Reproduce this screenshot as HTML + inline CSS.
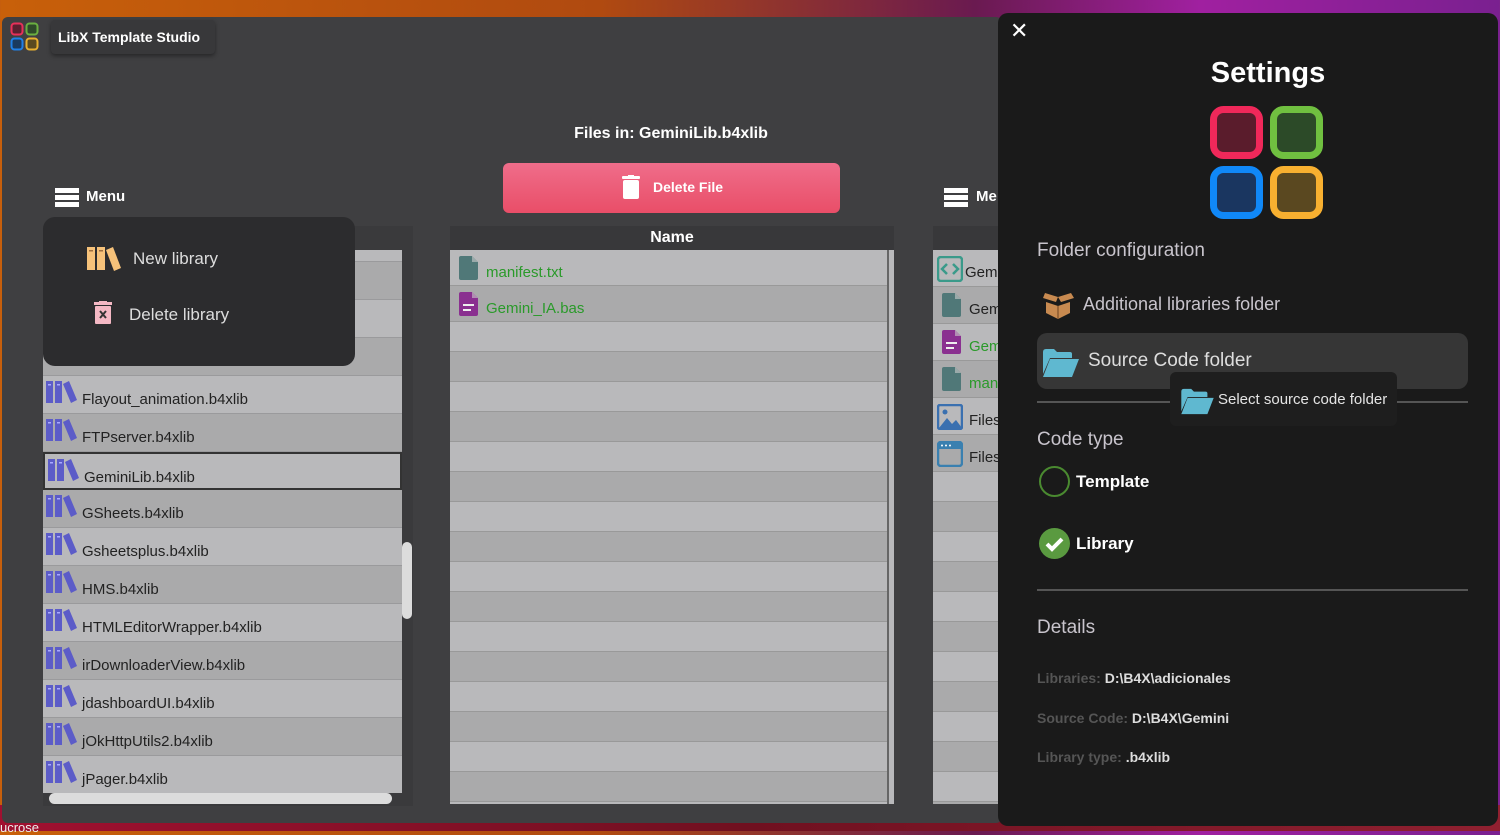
<!DOCTYPE html>
<html><head><meta charset="utf-8"><style>
*{margin:0;padding:0;box-sizing:border-box}
body{width:1500px;height:831px;overflow:hidden;position:relative;font-family:"Liberation Sans","DejaVu Sans",sans-serif;background:linear-gradient(90deg,#c8600a 0%,#b04a10 40%,#6a1a50 65%,#a020a0 80%,#7a2090 100%)}
.abs{position:absolute}
.win{left:2px;top:17px;width:1000px;height:806px;background:#3f3f41;border-radius:6px}
.row{position:absolute;left:0;width:359px;height:38px;border-bottom:1px solid #9a9a9c;font-size:15px;color:#222}
.row .t{position:absolute;left:39px;top:15px}
.row svg{position:absolute;left:3px;top:5px}
.mrow{position:absolute;left:0;width:438px;border-bottom:1px solid #999}
.rrow{position:absolute;left:0;width:70px;border-bottom:1px solid #999}
.panel{left:998px;top:13px;width:500px;height:813px;background:#1a1a1a;border-radius:10px}
.g{color:#c8c4cc}
</style></head><body>
<div class="abs" style="left:0;top:805px;width:1500px;height:26px;background:linear-gradient(90deg,#a01030,#701020 50%,#902030)"></div>
<div class="abs" style="left:0;top:820px;color:#eee;font-size:13px">ucrose</div>
<div class="abs win"></div>
<!-- logo -->
<svg class="abs" style="left:10px;top:22px" width="30" height="30" viewBox="0 0 30 30">
<rect x="1.5" y="1.5" width="11" height="11" rx="3" fill="#5a2030" stroke="#e8305a" stroke-width="2"/>
<rect x="16.5" y="1.5" width="11" height="11" rx="3" fill="#2e4a2a" stroke="#6ab040" stroke-width="2"/>
<rect x="1.5" y="16.5" width="11" height="11" rx="3" fill="#1a3a60" stroke="#2080e8" stroke-width="2"/>
<rect x="16.5" y="16.5" width="11" height="11" rx="3" fill="#5a4a20" stroke="#e8b030" stroke-width="2"/>
</svg>
<div class="abs" style="left:51px;top:20px;width:164px;height:34px;background:#38383a;border-radius:4px;box-shadow:0 2px 4px rgba(0,0,0,.4);color:#fff;font-weight:bold;font-size:14px;line-height:34px;padding-left:7px">LibX Template Studio</div>

<!-- menu -->
<div class="abs" style="left:55px;top:188px;width:24px;height:19px;background:linear-gradient(#fff 0 5px,transparent 5px 7px,#fff 7px 12px,transparent 12px 14px,#fff 14px)"></div>
<div class="abs" style="left:86px;top:188px;color:#fff;font-weight:bold;font-size:15px">Menu</div>
<div class="abs" style="left:944px;top:188px;width:24px;height:19px;background:linear-gradient(#fff 0 5px,transparent 5px 7px,#fff 7px 12px,transparent 12px 14px,#fff 14px)"></div>
<div class="abs" style="left:976px;top:188px;color:#fff;font-weight:bold;font-size:15px">Me</div>

<!-- left list -->
<div class="abs" style="left:43px;top:226px;width:370px;height:580px;background:#3a3a3c"></div>
<div class="abs" style="left:43px;top:250px;width:359px;height:543px;overflow:hidden">
<div class="row" style="top:-26px;background:#b9b9bb"></div>
<div class="row" style="top:12px;background:#aaaaab"></div>
<div class="row" style="top:50px;background:#b9b9bb"></div>
<div class="row" style="top:88px;background:#aaaaab"></div>
<div id="L"></div>
</div>
<div class="abs" style="left:402px;top:542px;width:10px;height:77px;background:#dcdcdc;border-radius:5px"></div>
<div class="abs" style="left:49px;top:793px;width:343px;height:11px;background:#dcdcdc;border-radius:6px"></div>

<!-- popup menu -->
<div class="abs" style="left:43px;top:217px;width:312px;height:149px;background:#2c2c2e;border-radius:12px"></div>
<svg class="abs" style="left:87px;top:247px" width="34" height="24" viewBox="0 0 34 24"><rect x="0" y="0" width="8" height="23" fill="#f6c27a"/><rect x="10" y="0" width="8" height="23" fill="#f6c27a"/><path d="M19 3l7-3 8 21-7 3z" fill="#f6c27a"/><rect x="2" y="3" width="4" height="1.5" fill="#a07040"/><rect x="12" y="3" width="4" height="1.5" fill="#a07040"/></svg>
<div class="abs" style="left:133px;top:249px;color:#ddd;font-size:17px">New library</div>
<svg class="abs" style="left:93px;top:301px" width="20" height="24" viewBox="0 0 20 24"><rect x="1" y="1" width="18" height="3" fill="#f4b8c4"/><rect x="6" y="0" width="8" height="2" fill="#f4b8c4"/><rect x="2" y="5" width="16" height="18" rx="1" fill="#f4b8c4"/><path d="M7 10l6 7M13 10l-6 7" stroke="#333" stroke-width="2"/></svg>
<div class="abs" style="left:129px;top:305px;color:#ddd;font-size:17px">Delete library</div>

<!-- center -->
<div class="abs" style="left:430px;top:125px;width:482px;text-align:center;color:#fff;font-weight:bold;font-size:16px">Files in: GeminiLib.b4xlib</div>
<div class="abs" style="left:503px;top:163px;width:337px;height:50px;border-radius:6px;background:linear-gradient(#ef6d8a,#e94e68)"></div>
<svg class="abs" style="left:622px;top:175px" width="18" height="24" viewBox="0 0 18 24"><rect x="0" y="1" width="18" height="3" rx="1" fill="#fff"/><rect x="6" y="0" width="6" height="2" fill="#fff"/><rect x="1" y="5" width="16" height="19" rx="2" fill="#fff"/></svg>
<div class="abs" style="left:653px;top:179px;color:#fff;font-weight:bold;font-size:14px">Delete File</div>
<div class="abs" style="left:450px;top:226px;width:444px;height:24px;background:#38383a;color:#fff;font-weight:bold;font-size:16px;text-align:center;line-height:24px">Name</div>
<div class="abs" style="left:450px;top:250px;width:444px;height:554px;overflow:hidden;background:#b9b9bb" id="M"></div>

<!-- right partial -->
<div class="abs" style="left:933px;top:226px;width:70px;height:24px;background:#38383a"></div>
<div class="abs" style="left:933px;top:250px;width:70px;height:554px;overflow:hidden;background:#b9b9bb" id="R"></div>

<!-- settings panel -->
<div class="abs panel"></div>
<div class="abs" style="left:1010px;top:18px;color:#fff;font-size:22px">✕</div>
<div class="abs" style="left:998px;top:57px;width:540px;text-align:center;color:#fff;font-weight:bold;font-size:29px">Settings</div>
<svg class="abs" style="left:1210px;top:106px" width="116" height="116" viewBox="0 0 116 116">
<rect x="3.5" y="3.5" width="46" height="46" rx="10" fill="#5a1c2c" stroke="#f0285a" stroke-width="7"/>
<rect x="63.5" y="3.5" width="46" height="46" rx="10" fill="#2c4a28" stroke="#70c040" stroke-width="7"/>
<rect x="3.5" y="63.5" width="46" height="46" rx="10" fill="#1a3660" stroke="#1088f8" stroke-width="7"/>
<rect x="63.5" y="63.5" width="46" height="46" rx="10" fill="#5a4820" stroke="#f8b030" stroke-width="7"/>
</svg>
<div class="abs g" style="left:1037px;top:240px;font-size:19px">Folder configuration</div>
<svg class="abs" style="left:1043px;top:289px" width="31" height="31" viewBox="0 0 31 31"><path d="M15 8l13-4 3 5-13 4zM15 8L2 4l-2 5 13 4z" fill="#c88a50"/><path d="M3 13l12 4 12-4v11l-12 6-12-6z" fill="#c88a50"/><path d="M15 17v13" stroke="#8a5a30" stroke-width="1.5"/></svg>
<div class="abs g" style="left:1083px;top:294px;font-size:18px">Additional libraries folder</div>
<div class="abs" style="left:1037px;top:333px;width:431px;height:56px;background:#363636;border-radius:10px"></div>
<svg class="abs" style="left:1043px;top:348px" width="36" height="30" viewBox="0 0 36 30"><path d="M0 4q0-3 3-3h8l3 3h13q2 0 2 2v4H7L0 26z" fill="#5fb8d0"/><path d="M7 11h29l-7 18H0z" fill="#5fb8d0"/></svg>
<div class="abs g" style="left:1088px;top:350px;font-size:19px;color:#ddd">Source Code folder</div>
<div class="abs" style="left:1037px;top:401px;width:431px;height:2px;background:#555"></div>
<div class="abs" style="left:1170px;top:372px;width:227px;height:54px;background:#1e1e1e;border-radius:6px"></div>
<svg class="abs" style="left:1181px;top:388px" width="33" height="27" viewBox="0 0 36 30"><path d="M0 4q0-3 3-3h8l3 3h13q2 0 2 2v4H7L0 26z" fill="#5fb8d0"/><path d="M7 11h29l-7 18H0z" fill="#5fb8d0"/></svg>
<div class="abs" style="left:1218px;top:391px;font-size:15px;color:#e4e4e4">Select source code folder</div>
<div class="abs g" style="left:1037px;top:429px;font-size:19px">Code type</div>
<div class="abs" style="left:1039px;top:466px;width:31px;height:31px;border:2.5px solid #4a8a30;border-radius:50%"></div>
<div class="abs" style="left:1076px;top:472px;color:#fff;font-weight:bold;font-size:17px">Template</div>
<svg class="abs" style="left:1039px;top:528px" width="31" height="31" viewBox="0 0 31 31"><circle cx="15.5" cy="15.5" r="15.5" fill="#5a9a40"/><path d="M8 16l5 5 10-10" stroke="#fff" stroke-width="4" fill="none"/></svg>
<div class="abs" style="left:1076px;top:534px;color:#fff;font-weight:bold;font-size:17px">Library</div>
<div class="abs" style="left:1037px;top:589px;width:431px;height:2px;background:#555"></div>
<div class="abs g" style="left:1037px;top:617px;font-size:19px">Details</div>
<div class="abs" style="left:1037px;top:670px;font-size:14px;color:#555;font-weight:bold">Libraries: <span style="color:#ddd">D:\B4X\adicionales</span></div>
<div class="abs" style="left:1037px;top:710px;font-size:14px;color:#555;font-weight:bold">Source Code: <span style="color:#ddd">D:\B4X\Gemini</span></div>
<div class="abs" style="left:1037px;top:749px;font-size:14px;color:#555;font-weight:bold">Library type: <span style="color:#ddd">.b4xlib</span></div>

<script>
var libIcon='<svg width="31" height="24" viewBox="0 0 31 24"><rect x="0" y="0" width="7" height="22" fill="#5c5cc8"/><rect x="9" y="0" width="7" height="22" fill="#5c5cc8"/><path d="M17 3l6-3 8 19-6 3z" fill="#5c5cc8"/><rect x="2" y="3" width="3" height="1.5" fill="#aaf"/><rect x="11" y="3" width="3" height="1.5" fill="#aaf"/></svg>';
var names=["Flayout_animation.b4xlib","FTPserver.b4xlib","GeminiLib.b4xlib","GSheets.b4xlib","Gsheetsplus.b4xlib","HMS.b4xlib","HTMLEditorWrapper.b4xlib","irDownloaderView.b4xlib","jdashboardUI.b4xlib","jOkHttpUtils2.b4xlib","jPager.b4xlib"];
var h="";names.forEach(function(n,i){var top=126+i*38;var bg=i%2?"#aaaaab":"#b9b9bb";var ex=i==2?"border:2px solid #333;":"";
h+='<div class="row" style="top:'+top+'px;background:'+bg+';'+ex+'">'+libIcon+'<span class="t">'+n+'</span></div>';});
document.getElementById("L").outerHTML=h;
var doc=function(c,lines){return '<svg width="20" height="24" viewBox="0 0 20 24"><path d="M2 0h11l6 6v16q0 2-2 2H2q-2 0-2-2V2q0-2 2-2z" fill="'+c+'"/><path d="M13 0v6h6" fill="#ccc" opacity=".6"/>'+(lines?'<rect x="4" y="12" width="11" height="2" fill="#eee"/><rect x="4" y="17" width="8" height="2" fill="#eee"/>':'')+'</svg>';};
var m="",y=0;var hs=[36,36];for(var i=0;i<20;i++){var hh=i<2?36:30;var bg=i%2?"#aaaaab":"#b9b9bb";
var c="";if(i==0)c='<div style="position:absolute;left:9px;top:6px">'+doc("#507878")+'</div><span style="position:absolute;left:36px;top:14px;color:#2a9a2a;font-size:15px">manifest.txt</span>';
if(i==1)c='<div style="position:absolute;left:9px;top:6px">'+doc("#8a3090",1)+'</div><span style="position:absolute;left:36px;top:14px;color:#2a9a2a;font-size:15px">Gemini_IA.bas</span>';
m+='<div class="mrow" style="top:'+y+'px;height:'+hh+'px;background:'+bg+'">'+c+'</div>';y+=hh;}
m+='<div style="position:absolute;left:437px;top:0;width:2px;height:554px;background:#666"></div>';
document.getElementById("M").innerHTML=m;
var r="";y=0;var rc=[['<svg width="26" height="26" viewBox="0 0 26 26"><rect x="1" y="1" width="24" height="24" rx="3" fill="none" stroke="#3a9a8a" stroke-width="2.5"/><path d="M10 8l-5 5 5 5M16 8l5 5-5 5" stroke="#3a9a8a" stroke-width="2.5" fill="none"/></svg>',"Gemi","#222"],[doc("#507878"),"Gem","#222"],[doc("#8a3090",1),"Gem","#2a9a2a"],[doc("#507878"),"man","#2a9a2a"],['<svg width="26" height="26" viewBox="0 0 26 26"><rect x="1" y="1" width="24" height="24" rx="2" fill="none" stroke="#3a70b0" stroke-width="2.5"/><circle cx="8" cy="8" r="2.5" fill="#3a70b0"/><path d="M2 24l8-10 5 6 4-4 6 8z" fill="#3a70b0"/></svg>',"Files","#222"],['<svg width="26" height="26" viewBox="0 0 26 26"><rect x="1" y="1" width="24" height="24" rx="3" fill="none" stroke="#3a80b0" stroke-width="2.5"/><rect x="1" y="1" width="24" height="7" fill="#3a80b0"/><circle cx="5" cy="4.5" r="1" fill="#fff"/><circle cx="9" cy="4.5" r="1" fill="#fff"/><circle cx="13" cy="4.5" r="1" fill="#fff"/></svg>',"Files","#222"]];
for(var i=0;i<18;i++){var hh=i<6?37:30;var bg=i%2?"#aaaaab":"#b9b9bb";var c="";if(i<6){c='<div style="position:absolute;left:'+(i==0||i>3?4:9)+'px;top:6px">'+rc[i][0]+'</div><span style="position:absolute;left:'+(i==0?32:36)+'px;top:14px;color:'+rc[i][2]+';font-size:15px">'+rc[i][1]+'</span>';}
r+='<div class="rrow" style="top:'+y+'px;height:'+hh+'px;background:'+bg+'">'+c+'</div>';y+=hh;}
document.getElementById("R").innerHTML=r;
</script>
</body></html>
